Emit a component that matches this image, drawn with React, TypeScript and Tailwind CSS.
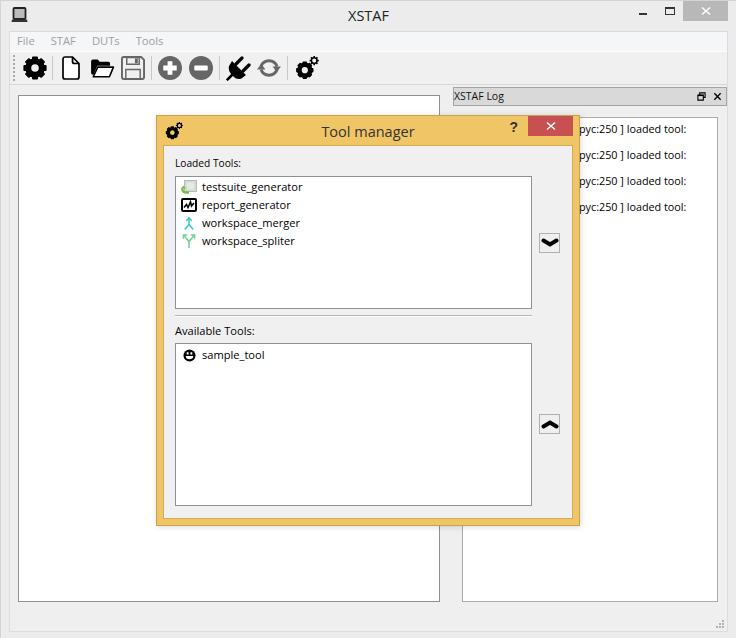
import React from "react";

const F = "font-['Open_Sans','Noto_Sans',sans-serif]";

function Gear({ size = 24, color = "#000" }: { size?: number; color?: string }) {
  const teeth = [0, 45, 90, 135, 180, 225, 270, 315];
  return (
    <svg width={size} height={size} viewBox="0 0 24 24">
      {teeth.map((a) => (
        <rect key={a} x="9" y="0.4" width="6" height="6" rx="1" fill={color} transform={`rotate(${a} 12 12)`} />
      ))}
      <circle cx="12" cy="12" r="6.8" fill="none" stroke={color} strokeWidth="6" />
    </svg>
  );
}

function Gears({ size = 24 }: { size?: number }) {
  const teeth = [0, 45, 90, 135, 180, 225, 270, 315];
  return (
    <svg width={size} height={size} viewBox="0 0 24 24">
      {teeth.map((a) => (
        <rect key={a} x="7.6" y="5.5" width="4.4" height="5" rx="0.8" fill="#000" transform={`rotate(${a} 9.8 14.2)`} />
      ))}
      <circle cx="9.8" cy="14.2" r="5.4" fill="none" stroke="#000" strokeWidth="4.6" />
      {teeth.map((a) => (
        <rect key={`s${a}`} x="18.4" y="0" width="1.6" height="2" fill="#000" transform={`rotate(${a} 19.2 4.6)`} />
      ))}
      <circle cx="19.2" cy="4.6" r="2.8" fill="none" stroke="#000" strokeWidth="1.5" />
    </svg>
  );
}

function Slot({ w = 31, children }: { w?: number; children: React.ReactNode }) {
  return <div className="flex items-center justify-center h-[32px]" style={{ width: w }}>{children}</div>;
}

function Toolbar() {
  return (
    <div className="flex items-center h-[33px] bg-[#f0f0f0] border-b border-[#d8d8d8] pl-[3px]">
      <div className="w-[3px] h-[26px] border-l-2 border-dotted border-[#a8a8a8] mr-[3px]" />
      <Slot w={32}><Gear size={24} /></Slot>
      <div className="w-px h-6 bg-[#c8c8c8] ml-[1px] mr-[3px]" />
      <Slot w={30}>
        <svg width="18" height="24" viewBox="0 0 18 24"><path d="M1 3a2 2 0 0 1 2-2h7.500L17 7.500V21a2 2 0 0 1-2 2H3a2 2 0 0 1-2-2Z M10.500 1v4.500a2 2 0 0 0 2 2H17" fill="#fff" stroke="#000" strokeWidth="1.700" /></svg>
      </Slot>
      <Slot w={32}>
        <svg width="25" height="19" viewBox="0 0 25 20"><path d="M0.500 2.500a2 2 0 0 1 2-2h5l2 2.500h9a2 2 0 0 1 2 2v2H7l-4 9.500H2.500a2 2 0 0 1-2-2Z" fill="#000" /><path d="M7.500 8.500H24l-4.200 10.200H2.800Z" fill="#fff" stroke="#000" strokeWidth="1.700" strokeLinejoin="round" /></svg>
      </Slot>
      <Slot w={30}>
        <svg width="24" height="24" viewBox="0 0 25 25"><path d="M1 3a2 2 0 0 1 2-2h18l3 3v18a2 2 0 0 1-2 2H3a2 2 0 0 1-2-2Z" fill="none" stroke="#666" strokeWidth="2" /><path d="M6 1.500h13v7H6Z" fill="none" stroke="#666" strokeWidth="1.500" /><rect x="14.500" y="2.500" width="3" height="5" fill="#666" /><path d="M5 14h15v10H5Z" fill="none" stroke="#666" strokeWidth="1.500" /></svg>
      </Slot>
      <div className="w-px h-6 bg-[#c8c8c8] ml-[3px] mr-[5px]" />
      <Slot w={26}>
        <svg width="24" height="24" viewBox="0 0 25 25"><circle cx="12.500" cy="12.500" r="12.500" fill="#666" /><path d="M10 5.500h5V10h4.500v5H15v4.500h-5V15H5.500v-5H10Z" fill="#fff" /></svg>
      </Slot>
      <div className="w-[4px]" />
      <Slot w={28}>
        <svg width="24" height="24" viewBox="0 0 25 25"><circle cx="12.500" cy="12.500" r="12.500" fill="#666" /><rect x="5.500" y="10" width="14" height="5" rx="1" fill="#fff" /></svg>
      </Slot>
      <div className="w-px h-6 bg-[#c8c8c8] ml-[4px] mr-[5px]" />
      <Slot w={26}>
        <svg width="25" height="25" viewBox="0 0 25 25">
          <path d="M6 5L20 19L15.500 22.500Q10.500 24.500 6.500 19.500Q1.500 14.500 3 10Z" fill="#000" />
          <path d="M10 8L16 2M17 15L23 9" stroke="#000" strokeWidth="3.200" strokeLinecap="round" />
          <path d="M0.800 24.200L7 18" stroke="#000" strokeWidth="2.600" />
        </svg>
      </Slot>
      <div className="w-[3px]" />
      <Slot w={30}>
        <svg width="24" height="22" viewBox="0 0 24 22">
          <path d="M4 9.500A8.500 8.500 0 0 1 20 9.500M20 12.500A8.500 8.500 0 0 1 4 12.500" fill="none" stroke="#666" strokeWidth="3" />
          <path d="M15.500 9.500H24L19.800 15ZM0 12.500H8.500L4.200 7Z" fill="#666" />
        </svg>
      </Slot>
      <div className="w-px h-6 bg-[#c8c8c8] ml-[3px] mr-[6px]" />
      <Slot w={25}><Gears size={24} /></Slot>
    </div>
  );
}

function ToolRow({ icon, label }: { icon: React.ReactNode; label: string }) {
  return (
    <div className="flex items-center h-[18px] pl-[5px]">
      <div className="w-4 h-4 flex items-center justify-center shrink-0">{icon}</div>
      <span className="ml-[5px] text-[11.100px] text-[#000] leading-[18px]">{label}</span>
    </div>
  );
}

function Dialog() {
  return (
    <div className={`absolute left-[155px] top-[114px] w-[424px] h-[411px] bg-[#f0c566] border border-[#c9a24e] shadow-[1px_1px_6px_rgba(0,0,0,0.15)] flex flex-col ${F}`}>
      <div className="h-[29px] flex items-center relative shrink-0">
        <div className="ml-[8px]"><Gears size={18} /></div>
        <div className="absolute left-0 right-0 top-[6px] text-center text-[14.500px] leading-[20px] text-[#333]">Tool manager</div>
        <div className="ml-auto mr-[6px] flex items-start self-start">
          <span className="text-[14px] font-bold text-[#333] mr-[10px] mt-[1px] leading-[20px] font-['Liberation_Sans',sans-serif]">?</span>
          <div className="w-[45px] h-[20px] bg-[#c75050] flex items-center justify-center">
            <svg width="10" height="10" viewBox="0 0 10 10"><path d="M1 1.500l8 7M9 1.500l-8 7" stroke="#fff" strokeWidth="1.500" /></svg>
          </div>
        </div>
      </div>
      <div className="mx-[6px] mb-[6px] flex-1 bg-[#f0f0f0] border border-[#d3ab55] pl-[11px] pr-[8px] flex flex-col">
        <div className="mt-[9px] text-[10.200px] leading-[16px] text-[#000]">Loaded Tools:</div>
        <div className="flex mt-[5px]">
          <div className="w-[357px] h-[133px] bg-white border border-[#8f8f96] pt-[1px]">
            <ToolRow label="testsuite_generator" icon={
              <svg width="16" height="14" viewBox="0 0 16 14"><rect x="3.500" y="0.500" width="12" height="11" fill="#d4dad4" stroke="#b4bcb4" /><rect x="6" y="2.500" width="7" height="7" fill="#e6eae6" /><path d="M1.500 8a3.500 3.500 0 0 0 3.500 4.500H8" fill="none" stroke="#76bd4c" strokeWidth="2.400" /><path d="M0 8.500h5L2.500 5.500Z" fill="#76bd4c" /></svg>
            } />
            <ToolRow label="report_generator" icon={
              <svg width="16" height="14" viewBox="0 0 16 14"><rect x="1" y="1" width="14" height="12" rx="1" fill="#fff" stroke="#000" strokeWidth="2" /><path d="M3 9.500l2.500-3 1.500 3L9.500 4l1 4L13 5" fill="none" stroke="#000" strokeWidth="1.600" /></svg>
            } />
            <ToolRow label="workspace_merger" icon={
              <svg width="14" height="15" viewBox="0 0 14 16"><path d="M7 2v7M2.500 14.500L7 9l4.500 5.500M4 5L7 2l3 3" fill="none" stroke="#3ccbbd" strokeWidth="1.600" /></svg>
            } />
            <ToolRow label="workspace_spliter" icon={
              <svg width="14" height="15" viewBox="0 0 14 16"><path d="M7 15V8M2 2L7 8l5-6M1 5V1h4M13 5V1H9" fill="none" stroke="#6fcf8f" strokeWidth="1.600" /></svg>
            } />
          </div>
          <div className="ml-[7px] mt-[57px] w-[21px] h-[20px] border border-[#b0b0b0] bg-[#efefef] flex items-center justify-center">
            <svg width="18" height="10" viewBox="0 0 18 10"><path d="M2.500 2.500L9 6.500l6.500-4" fill="none" stroke="#000" strokeWidth="4" strokeLinecap="round" /></svg>
          </div>
        </div>
        <div className="w-[357px] h-px bg-[#b4b4b4] mt-[6px] border-b border-white box-content" />
        <div className="mt-[6px] text-[11.100px] leading-[16px] text-[#000]">Available Tools:</div>
        <div className="flex mt-[4px]">
          <div className="w-[357px] h-[163px] bg-white border border-[#8f8f96] pt-[2px]">
            <ToolRow label="sample_tool" icon={
              <svg width="13" height="13" viewBox="0 0 14 14"><circle cx="7" cy="7" r="6.500" fill="#000" /><rect x="4" y="3.500" width="2" height="2.500" fill="#fff" /><rect x="8" y="3.500" width="2" height="2.500" fill="#fff" /><path d="M3 7.500h8a4 3.500 0 0 1-8 0Z" fill="#fff" /></svg>
            } />
          </div>
          <div className="ml-[7px] mt-[71px] w-[21px] h-[20px] border border-[#b0b0b0] bg-[#efefef] flex items-center justify-center">
            <svg width="18" height="10" viewBox="0 0 18 10"><path d="M2.500 7.500L9 3.500l6.500 4" fill="none" stroke="#000" strokeWidth="4" strokeLinecap="round" /></svg>
          </div>
        </div>
      </div>
    </div>
  );
}

export default function App() {
  const logs = [0, 1, 2, 3];
  return (
    <div className={`relative w-[736px] h-[638px] bg-[#ececec] overflow-hidden border-t border-l border-[#d4d4d4] flex flex-col ${F}`}>
      <div className="h-[30px] relative flex items-center shrink-0">
        <div className="absolute left-[10px] top-[6px]">
          <svg width="17" height="16" viewBox="0 0 17 16"><rect x="2.500" y="1" width="12" height="11" rx="1" fill="#bbb" stroke="#222" strokeWidth="1.800" /><path d="M1 12.500h15l0.500 2.500H0.500Z" fill="#333" /></svg>
        </div>
        <div className="w-full text-center text-[14.500px] leading-[20px] text-[#222] -mt-[1px]">XSTAF</div>
        <div className="absolute right-[8px] top-0 flex items-start">
          <div className="w-[8px] h-[2px] bg-[#333] mt-[12px] mr-[18px]" />
          <div className="w-[8px] h-[5px] mt-[6px] mr-[8px] box-content border border-[#333] border-t-2" />
          <div className="w-[45px] h-[20px] bg-[#b8b8b8] flex items-center justify-center">
            <svg width="10" height="10" viewBox="0 0 10 10"><path d="M1 1.500l8 7M9 1.500l-8 7" stroke="#fff" strokeWidth="1.500" /></svg>
          </div>
        </div>
      </div>
      <div className="ml-[8px] mr-[8px] flex-1 flex flex-col border border-[#dcdcdc] bg-[#efefef] mb-[6px]">
        <div className="h-[20px] bg-[#f5f6f7] border-b border-white flex items-center pl-[7px] text-[11.200px] text-[#a0a0a0] shrink-0">
          <span className="mr-[16px]">File</span>
          <span className="mr-[16px]">STAF</span>
          <span className="mr-[16px]">DUTs</span>
          <span>Tools</span>
        </div>
        <Toolbar />
        <div className="flex flex-1 relative">
          <div className="ml-[8px] mt-[10px] w-[422px] h-[507px] bg-white border border-[#8f8f96]" />
          <div className="ml-[13px] flex-1 flex flex-col mt-[2px]">
            <div className="h-[19px] bg-[#d9d9d9] border border-[#a5a5a5] flex items-center text-[10.500px] text-[#111]">
              <span>XSTAF Log</span>
              <div className="ml-auto mr-[4px] flex items-center gap-[7px]">
                <svg width="9" height="9" viewBox="0 0 10 10"><path d="M3 3V1h6v5H7M1 3.500h6V9H1Z" fill="none" stroke="#000" strokeWidth="1.200" /><path d="M1 3.800h6" stroke="#000" strokeWidth="1.500" /></svg>
                <svg width="9" height="9" viewBox="0 0 10 10"><path d="M1.500 1.500l7 7M8.500 1.500l-7 7" stroke="#000" strokeWidth="1.500" /></svg>
              </div>
            </div>
            <div className="ml-[9px] mt-[11px] w-[256px] h-[485px] bg-white border border-[#ababab] flex flex-col pt-[2px]">
              {logs.map((l) => (
                <div key={l} className="h-[26px] pl-[116px] text-[10.800px] leading-[17px] text-[#000] whitespace-nowrap">pyc:250 ] loaded tool:</div>
              ))}
            </div>
            <div className="flex justify-end flex-1 items-end pr-[2px] pb-[2px]">
              <svg width="9" height="9" viewBox="0 0 9 9" fill="#b0b0b0"><rect x="6" y="0" width="2" height="2" /><rect x="3" y="3" width="2" height="2" /><rect x="6" y="3" width="2" height="2" /><rect x="0" y="6" width="2" height="2" /><rect x="3" y="6" width="2" height="2" /><rect x="6" y="6" width="2" height="2" /></svg>
            </div>
          </div>
        </div>
      </div>
      <Dialog />
    </div>
  );
}
